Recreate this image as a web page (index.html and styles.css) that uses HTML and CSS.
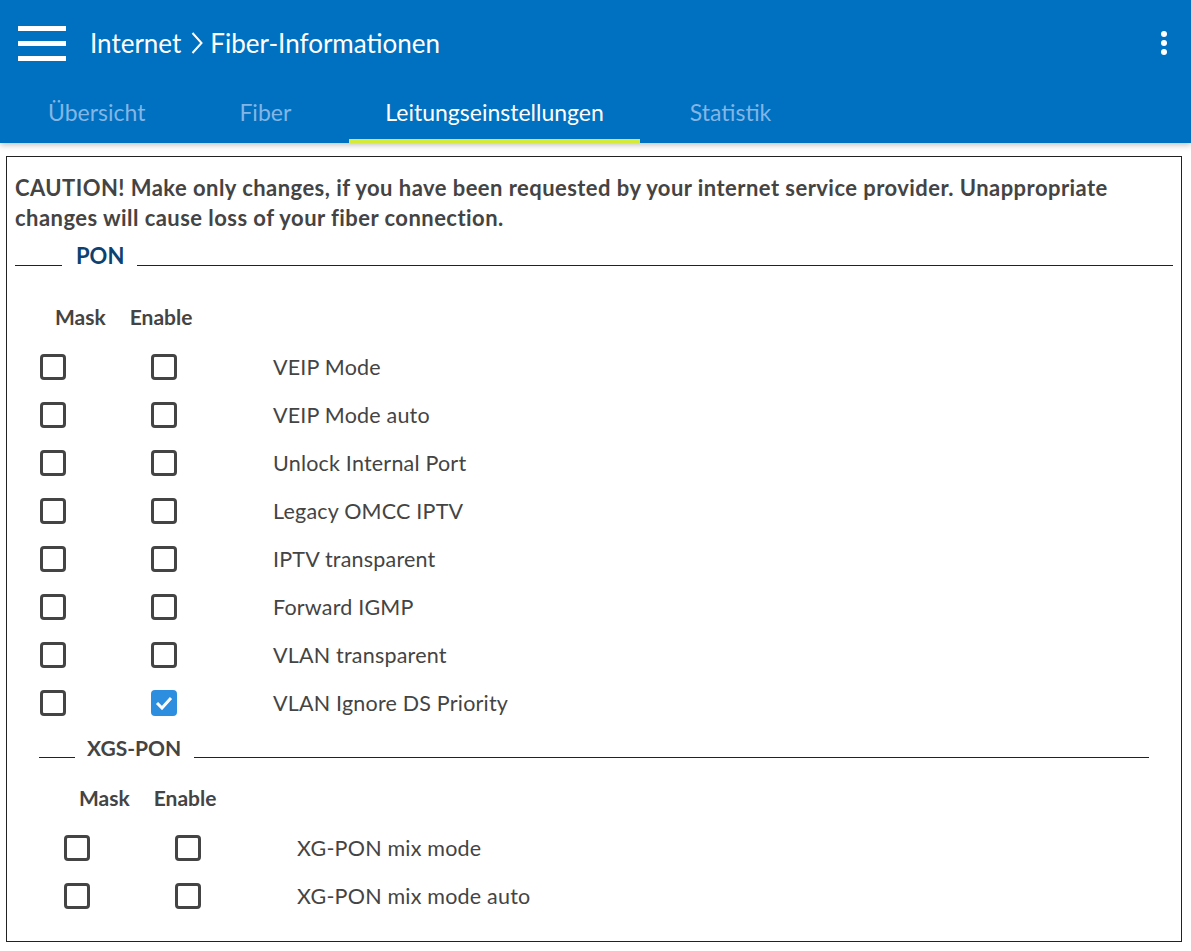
FILE: index.html
```html
<!DOCTYPE html>
<html lang="de">
<head>
    <meta charset="UTF-8">
    <title>Fiber-Informationen</title>
    <link rel="stylesheet" href="styles.css">
</head>
<body>
    <header class="app-bar">
        <div class="top-row">
            <div class="burger"><span></span><span></span><span></span></div>
            <h1 class="crumbs">Internet
                <svg class="chev" width="12" height="22" viewBox="0 0 12 22"><polyline points="1.5,1 10.5,11 1.5,21" fill="none" stroke="#fff" stroke-width="2"/></svg>
                Fiber-Informationen</h1>
            <div class="kebab"><i></i><i></i><i></i></div>
        </div>
        <nav class="tabs">
            <a class="tab">Übersicht</a>
            <a class="tab">Fiber</a>
            <a class="tab active">Leitungseinstellungen</a>
            <a class="tab last">Statistik</a>
        </nav>
    </header>

    <main class="panel">
        <p class="caution">CAUTION! Make only changes, if you have been requested by your internet service provider. Unappropriate changes will cause loss of your fiber connection.</p>

        <section class="group">
            <div class="legend pon"><span class="rule short"></span><span class="legend-text">PON</span><span class="rule"></span></div>
            <div class="col-heads"><span>Mask</span><span>Enable</span></div>
            <div class="opt"><span class="cb"></span><span class="cb"></span><span class="lbl">VEIP Mode</span></div>
            <div class="opt"><span class="cb"></span><span class="cb"></span><span class="lbl">VEIP Mode auto</span></div>
            <div class="opt"><span class="cb"></span><span class="cb"></span><span class="lbl">Unlock Internal Port</span></div>
            <div class="opt"><span class="cb"></span><span class="cb"></span><span class="lbl">Legacy OMCC IPTV</span></div>
            <div class="opt"><span class="cb"></span><span class="cb"></span><span class="lbl">IPTV transparent</span></div>
            <div class="opt"><span class="cb"></span><span class="cb"></span><span class="lbl">Forward IGMP</span></div>
            <div class="opt"><span class="cb"></span><span class="cb"></span><span class="lbl">VLAN transparent</span></div>
            <div class="opt"><span class="cb"></span><span class="cb checked"><svg width="18" height="14" viewBox="0 0 18 14"><polyline points="2,7 7,12 16,2" fill="none" stroke="#fff" stroke-width="3"/></svg></span><span class="lbl">VLAN Ignore DS Priority</span></div>

            <section class="group sub">
                <div class="legend"><span class="rule short"></span><span class="legend-text">XGS-PON</span><span class="rule"></span></div>
                <div class="col-heads"><span>Mask</span><span>Enable</span></div>
                <div class="opt"><span class="cb"></span><span class="cb"></span><span class="lbl">XG-PON mix mode</span></div>
                <div class="opt"><span class="cb"></span><span class="cb"></span><span class="lbl">XG-PON mix mode auto</span></div>
            </section>
        </section>
    </main>
</body>
</html>
```

FILE: styles.css
```css
body {
    margin: 0;
    font-family: 'Lato', 'Liberation Sans', sans-serif;
    background-color: #fff;
    color: #444;
}
.app-bar {
    background-color: #0070c0;
    height: 143px;
    box-shadow: 0 2px 6px rgba(0, 0, 0, 0.25);
    color: #fff;
}
.top-row {
    display: flex;
    align-items: center;
    height: 86px;
    padding: 0 24px 0 18px;
}
.burger {
    width: 48px;
    display: flex;
    flex-direction: column;
    gap: 10px;
}
.burger span {
    display: block;
    height: 5px;
    background-color: #fff;
}
.crumbs {
    flex: 1;
    margin: 0 0 0 24px;
    font-size: 26px;
    font-weight: normal;
    display: flex;
    align-items: center;
}
.chev {
    margin: 0 7px 0 10px;
}
.kebab {
    display: flex;
    flex-direction: column;
    gap: 3px;
}
.kebab i {
    width: 6px;
    height: 6px;
    border-radius: 50%;
    background-color: #fff;
}
.tabs {
    display: flex;
    height: 57px;
    padding-left: 12px;
    gap: 22px;
}
.tab {
    padding: 0 36px 2px 36px;
    font-size: 23px;
    color: #82b6e6;
    display: flex;
    align-items: center;
    border-bottom: 4px solid transparent;
    box-sizing: border-box;
}
.tab.active {
    color: #fff;
    border-bottom-color: #d6ea3a;
}
.tab.last {
    padding-left: 28px;
}

.panel {
    margin: 13px 9px 10px 6px;
    border: 1px solid #222;
    padding: 16px 8px 20px 8px;
    min-height: 786px;
    box-sizing: border-box;
}
.caution {
    margin: 0;
    padding-right: 20px;
    font-size: 22px;
    letter-spacing: 0.45px;
    font-weight: bold;
    line-height: 30px;
    color: #444;
}
.legend {
    display: flex;
    align-items: center;
    height: 36px;
    margin-top: 4px;
}
.rule {
    flex: 1;
    height: 1px;
    background-color: #222;
    margin-top: 20px;
}
.rule.short {
    flex: 0 0 47px;
}
.legend-text {
    padding: 0 13px 0 14px;
    font-size: 22px;
    font-weight: bold;
    color: #444;
}
.legend.pon .legend-text {
    color: #0c4170;
}
.col-heads {
    display: flex;
    gap: 24px;
    padding-left: 40px;
    margin-top: 27px;
    margin-bottom: 11px;
    height: 32px;
    align-items: center;
    font-size: 21px;
    font-weight: bold;
}
.opt {
    display: grid;
    grid-template-columns: 111px 122px 1fr;
    align-items: center;
    height: 48px;
    padding-left: 25px;
}
.cb {
    width: 26px;
    height: 26px;
    box-sizing: border-box;
    border: 3px solid #444;
    border-radius: 4px;
    display: flex;
    align-items: center;
    justify-content: center;
}
.cb.checked {
    border: none;
    background-color: #2d8ddf;
}
.lbl {
    font-size: 21.5px;
    letter-spacing: 0.2px;
    color: #444;
}
.group.sub {
    margin: 2px 24px 0 24px;
}
.group.sub .legend {
    margin-top: 0;
}
.group.sub .rule.short {
    flex-basis: 36px;
}
.group.sub .legend-text {
    font-size: 21px;
    padding: 0 13px 0 12px;
}
.group.sub .col-heads {
    margin-top: 16px;
}
```
